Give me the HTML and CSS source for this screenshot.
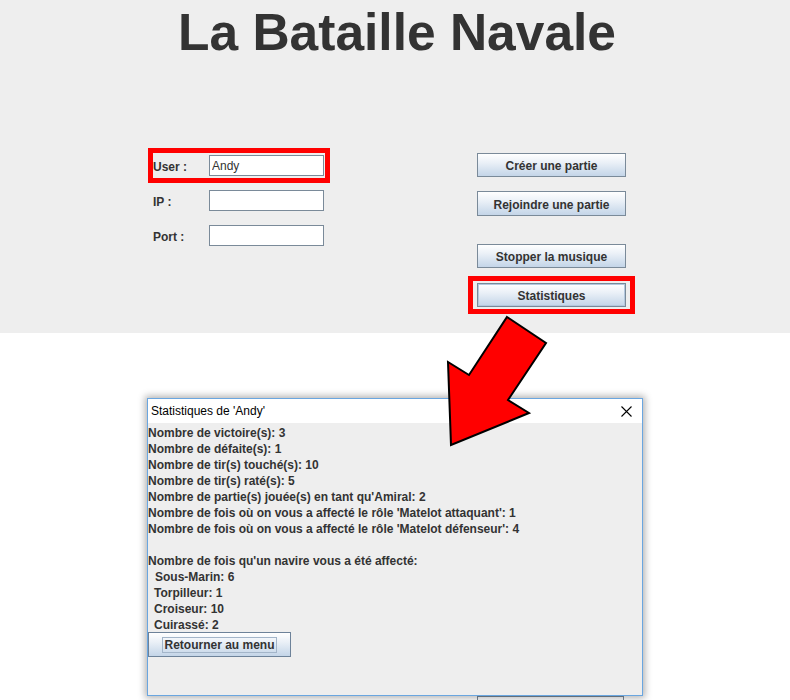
FILE: index.html
```html
<!DOCTYPE html>
<html lang="fr">
<head>
<meta charset="utf-8">
<title>La Bataille Navale</title>
<link rel="stylesheet" href="styles.css">
</head>
<body>
<div class="page">
  <div class="app">
    <h1 class="title">La Bataille Navale</h1>
    <div class="panel">
      <div class="form">
        <div class="row hl"><span class="lbl">User :</span><input class="field" type="text" value="Andy" readonly></div>
        <div class="row"><span class="lbl">IP :</span><input class="field" type="text" value="" readonly></div>
        <div class="row"><span class="lbl">Port :</span><input class="field" type="text" value="" readonly></div>
      </div>
      <div class="actions">
        <button class="btn b-create">Créer une partie</button>
        <button class="btn b-join">Rejoindre une partie</button>
        <button class="btn b-music">Stopper la musique</button>
        <div class="hlbox"><button class="btn btn-default">Statistiques</button></div>
      </div>
    </div>
  </div>
  <div class="desk">
    <div class="under-btn"></div>
    <div class="dialog">
      <div class="dlg-title">
        <span class="dlg-name">Statistiques de 'Andy'</span>
        <svg class="dlg-close" width="11" height="11" viewBox="0 0 11 11"><path d="M0.5 0.5 L10.5 10.5 M10.5 0.5 L0.5 10.5" stroke="#000" stroke-width="1.1" fill="none"/></svg>
      </div>
      <div class="dlg-body">
        <div class="line">Nombre de victoire(s): 3</div>
        <div class="line">Nombre de défaite(s): 1</div>
        <div class="line">Nombre de tir(s) touché(s): 10</div>
        <div class="line">Nombre de tir(s) raté(s): 5</div>
        <div class="line">Nombre de partie(s) jouée(s) en tant qu'Amiral: 2</div>
        <div class="line">Nombre de fois où on vous a affecté le rôle 'Matelot attaquant': 1</div>
        <div class="line">Nombre de fois où on vous a affecté le rôle 'Matelot défenseur': 4</div>
        <div class="line blank"></div>
        <div class="line">Nombre de fois qu'un navire vous a été affecté:</div>
        <div class="line sub sub-first">Sous-Marin: 6</div>
        <div class="line sub">Torpilleur: 1</div>
        <div class="line sub">Croiseur: 10</div>
        <div class="line sub">Cuirassé: 2</div>
        <button class="btn btn-back"><span class="focus">Retourner au menu</span></button>
      </div>
    </div>
  </div>
  <svg class="arrow" width="790" height="700" viewBox="0 0 790 700">
    <polygon points="507,317 546,343 508,400 529,413 451,445 448,362 469,375" fill="#ff0000" stroke="#000" stroke-width="2" stroke-linejoin="miter"/>
  </svg>
</div>
</body>
</html>
```

FILE: styles.css
```css
html, body {
  margin: 0;
  padding: 0;
  overflow: hidden;
  background: #ffffff;
}

.page {
  position: relative;
  width: 790px;
  height: 700px;
  overflow: hidden;
  display: flex;
  flex-direction: column;
  font-family: "Liberation Sans", Arial, sans-serif;
}

.app {
  height: 333px;
  flex: 0 0 333px;
  background: #eeeeee;
}

.title {
  margin: 0;
  padding-left: 4px;
  height: 64px;
  line-height: 64px;
  font-size: 51.5px;
  font-weight: bold;
  color: #333333;
  text-align: center;
}

.panel {
  display: flex;
  margin-top: 84px;
  padding-left: 148px;
}

.form {
  display: flex;
  flex-direction: column;
  width: 182px;
}

.row {
  box-sizing: border-box;
  width: 182px;
  height: 35px;
  border: 5px solid transparent;
  display: flex;
  align-items: center;
}

.row.hl {
  border-color: #ff0000;
}

.lbl {
  flex: 0 0 56px;
  padding-top: 2px;
  font-size: 12px;
  font-weight: bold;
  color: #333333;
}

.field {
  box-sizing: border-box;
  width: 115px;
  height: 21px;
  margin: 0;
  padding: 1px 2px 0;
  border: 1px solid #7a8a99;
  background: #ffffff;
  font-family: "Liberation Sans", Arial, sans-serif;
  font-size: 12px;
  color: #333333;
  outline: none;
}

.actions {
  margin-left: 138px;
  width: 167px;
  display: flex;
  flex-direction: column;
  align-items: center;
}

.btn {
  box-sizing: border-box;
  width: 149px;
  height: 24px;
  margin: 0;
  padding: 2px 0 0;
  border: 1px solid #7a8a99;
  border-radius: 0;
  background: linear-gradient(to bottom, #ffffff 0%, #eaf0f7 40%, #d3e0ee 75%, #c4d5e8 100%);
  font-family: "Liberation Sans", Arial, sans-serif;
  font-size: 12px;
  font-weight: bold;
  color: #333333;
}

.b-create { margin-top: 5px; }
.b-join { margin-top: 14px; height: 25px; }
.b-music { margin-top: 28px; }

.hlbox {
  margin-top: 8px;
  border: 5px solid #ff0000;
  padding: 2px 4px;
  display: flex;
}

.btn-default {
  height: 24px;
  box-shadow: inset 0 0 0 1px #b4c8de;
}

.desk {
  position: relative;
  flex: 1;
  background: #ffffff;
}

.under-btn {
  position: absolute;
  left: 477px;
  top: 363px;
  width: 147px;
  height: 30px;
  box-sizing: border-box;
  border: 1px solid #7a8a99;
  background: linear-gradient(to bottom, #ffffff, #c6d6e8);
}

.dialog {
  position: absolute;
  left: 147px;
  top: 65px;
  width: 496px;
  height: 298px;
  box-sizing: border-box;
  border: 1px solid #6aa6e0;
  background: #eeeeee;
  box-shadow: 0 0 7px 2px rgba(0, 0, 0, 0.3);
  display: flex;
  flex-direction: column;
}

.dlg-title {
  height: 24px;
  flex: 0 0 24px;
  background: #ffffff;
  display: flex;
  align-items: center;
  justify-content: space-between;
  padding: 0 10px 0 3px;
}

.dlg-name {
  font-size: 12px;
  color: #000000;
}

.dlg-close {
  display: block;
  margin-top: 1px;
}

.dlg-body {
  padding-top: 2px;
  display: flex;
  flex-direction: column;
  align-items: flex-start;
}

.line {
  height: 16px;
  line-height: 16px;
  font-size: 12px;
  font-weight: bold;
  color: #333333;
  white-space: nowrap;
}

.sub {
  padding-left: 6px;
}

.sub-first {
  padding-left: 7px;
}

.btn-back {
  width: 143px;
  height: 25px;
  margin-top: -1px;
  padding: 1px 0 0;
  border-color: #6d8299;
  display: flex;
  align-items: center;
  justify-content: center;
}

.focus {
  display: block;
  height: 16px;
  line-height: 14px;
  box-sizing: border-box;
  border: 1px solid #a3b5c9;
  padding: 0 1px;
}

.arrow {
  position: absolute;
  left: 0;
  top: 0;
  pointer-events: none;
}
```
